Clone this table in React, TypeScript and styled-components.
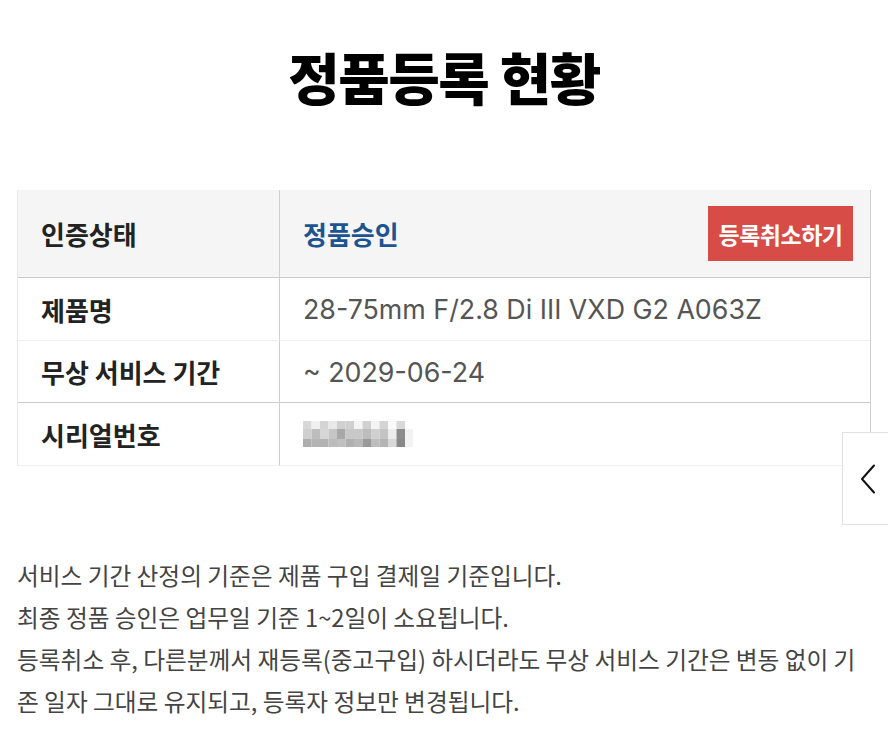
import React from "react";
import styled, { createGlobalStyle } from "styled-components";

const Global = createGlobalStyle`
  html, body { margin: 0; padding: 0; background: #fff; }
  body { font-family: "Noto Sans CJK KR", "Noto Sans", sans-serif; }
  * { box-sizing: border-box; }
`;

const Page = styled.div`
  padding: 0 17px;
  width: 888px;
`;

const Title = styled.h1`
  margin: 0;
  padding-top: 36px;
  height: 190px;
  text-align: center;
  font-size: 56px;
  font-weight: 900;
  color: #000;
  line-height: 80px;
  letter-spacing: -1.5px;
`;

const Table = styled.div`
  display: grid;
  grid-template-columns: 262px 1fr;
  border-left: 1px solid #e8e8e8;
  border-right: 1px solid #cfcfcf;
`;

const Label = styled.div<{ $h: number; $bg?: string; $line?: string }>`
  height: ${(p) => p.$h}px;
  background: ${(p) => p.$bg || "#fff"};
  border-bottom: 1px solid ${(p) => p.$line || "#f0f0f0"};
  border-right: 1px solid #cfcfcf;
  display: flex;
  align-items: center;
  padding-left: 23px;
  font-size: 26px;
  font-weight: 700;
  color: #222;
`;

const Value = styled.div<{ $h: number; $bg?: string; $line?: string }>`
  height: ${(p) => p.$h}px;
  background: ${(p) => p.$bg || "#fff"};
  border-bottom: 1px solid ${(p) => p.$line || "#f0f0f0"};
  display: flex;
  align-items: center;
  justify-content: space-between;
  padding-left: 23px;
  padding-right: 17px;
  font-family: Inter, "Noto Sans CJK KR", sans-serif;
  font-size: 26.8px;
  color: #555;
`;

const Status = styled.span`
  color: #1d5490;
  font-weight: 700;
  font-size: 26px;
`;

const CancelButton = styled.button`
  width: 145px;
  height: 55px;
  border: none;
  background: #d84c47;
  color: #fff;
  font-family: "Noto Sans CJK KR", sans-serif;
  font-size: 23px;
  font-weight: 700;
  letter-spacing: -0.5px;
  padding: 0;
  cursor: pointer;
`;

const Notes = styled.div`
  padding-top: 88px;
  padding-right: 6px;
  font-size: 23.7px;
  line-height: 42px;
  color: #444;
  word-break: break-all;
`;

const NoteLine = styled.p`
  margin: 0;
`;

const SideTab = styled.div`
  position: fixed;
  right: 0;
  top: 432px;
  width: 46px;
  height: 93px;
  background: #fff;
  border: 1px solid #e2e2e2;
  border-right: none;
  display: flex;
  align-items: center;
  justify-content: center;
  padding-left: 4px;
`;

const grays = [
  ["#d8d8d8", "#f0f0f0", "#d4d4d4", "#e8e8e8", "#d0d0d0", "#d0d0d0", "#f4f4f4", "#d0d0d0", "#f4f4f4", "#d4d4d4", "#fafafa", "#d8d8d8"],
  ["#cfcfcf", "#bdbdbd", "#d6d6d6", "#c6c6c6", "#a8a8a8", "#c8c8c8", "#c8c8c8", "#bcbcbc", "#d0d0d0", "#c4c4c4", "#ececec", "#8c8c8c"],
  ["#aeaeae", "#b4b4b4", "#b2b2b2", "#bcbcbc", "#c0c0c0", "#b0b0b0", "#b8b8b8", "#9a9a9a", "#bdbdbd", "#b4b4b4", "#d8d8d8", "#888888"],
];

function Mosaic() {
  const w = 8.5;
  const rows = [
    { y: 0, h: 8 },
    { y: 8, h: 10 },
    { y: 18, h: 8 },
  ];
  return (
    <svg width="112" height="26" viewBox="0 0 112 26" aria-hidden>
      {grays.map((row, ri) =>
        row.map((c, ci) => (
          <rect key={`${ri}-${ci}`} x={ci * w} y={rows[ri].y} width={w} height={rows[ri].h} fill={c} />
        ))
      )}
      <rect x={102} y={8} width={8} height={18} fill="#f2f2f2" />
    </svg>
  );
}

export default function App() {
  return (
    <>
      <Global />
      <Page>
        <Title>정품등록 현황</Title>
        <Table>
          <Label $h={88} $bg="#f5f5f5" $line="#cccccc">인증상태</Label>
          <Value $h={88} $bg="#f5f5f5" $line="#cccccc">
            <Status>정품승인</Status>
            <CancelButton>등록취소하기</CancelButton>
          </Value>
          <Label $h={63}>제품명</Label>
          <Value $h={63}>28-75mm F/2.8 Di III VXD G2 A063Z</Value>
          <Label $h={62} $line="#cccccc">무상 서비스 기간</Label>
          <Value $h={62} $line="#cccccc">~ 2029-06-24</Value>
          <Label $h={63}>시리얼번호</Label>
          <Value $h={63}>
            <Mosaic />
          </Value>
        </Table>
        <Notes>
          <NoteLine>서비스 기간 산정의 기준은 제품 구입 결제일 기준입니다.</NoteLine>
          <NoteLine>최종 정품 승인은 업무일 기준 1~2일이 소요됩니다.</NoteLine>
          <NoteLine>
            등록취소 후, 다른분께서 재등록(중고구입) 하시더라도 무상 서비스 기간은 변동 없이 기존 일자 그대로 유지되고, 등록자 정보만 변경됩니다.
          </NoteLine>
        </Notes>
      </Page>
      <SideTab>
        <svg width="16" height="30" viewBox="0 0 16 30" fill="none">
          <path d="M14 1.5 L2 15 L14 28.5" stroke="#111" strokeWidth="2" strokeLinecap="round" strokeLinejoin="round" />
        </svg>
      </SideTab>
    </>
  );
}
